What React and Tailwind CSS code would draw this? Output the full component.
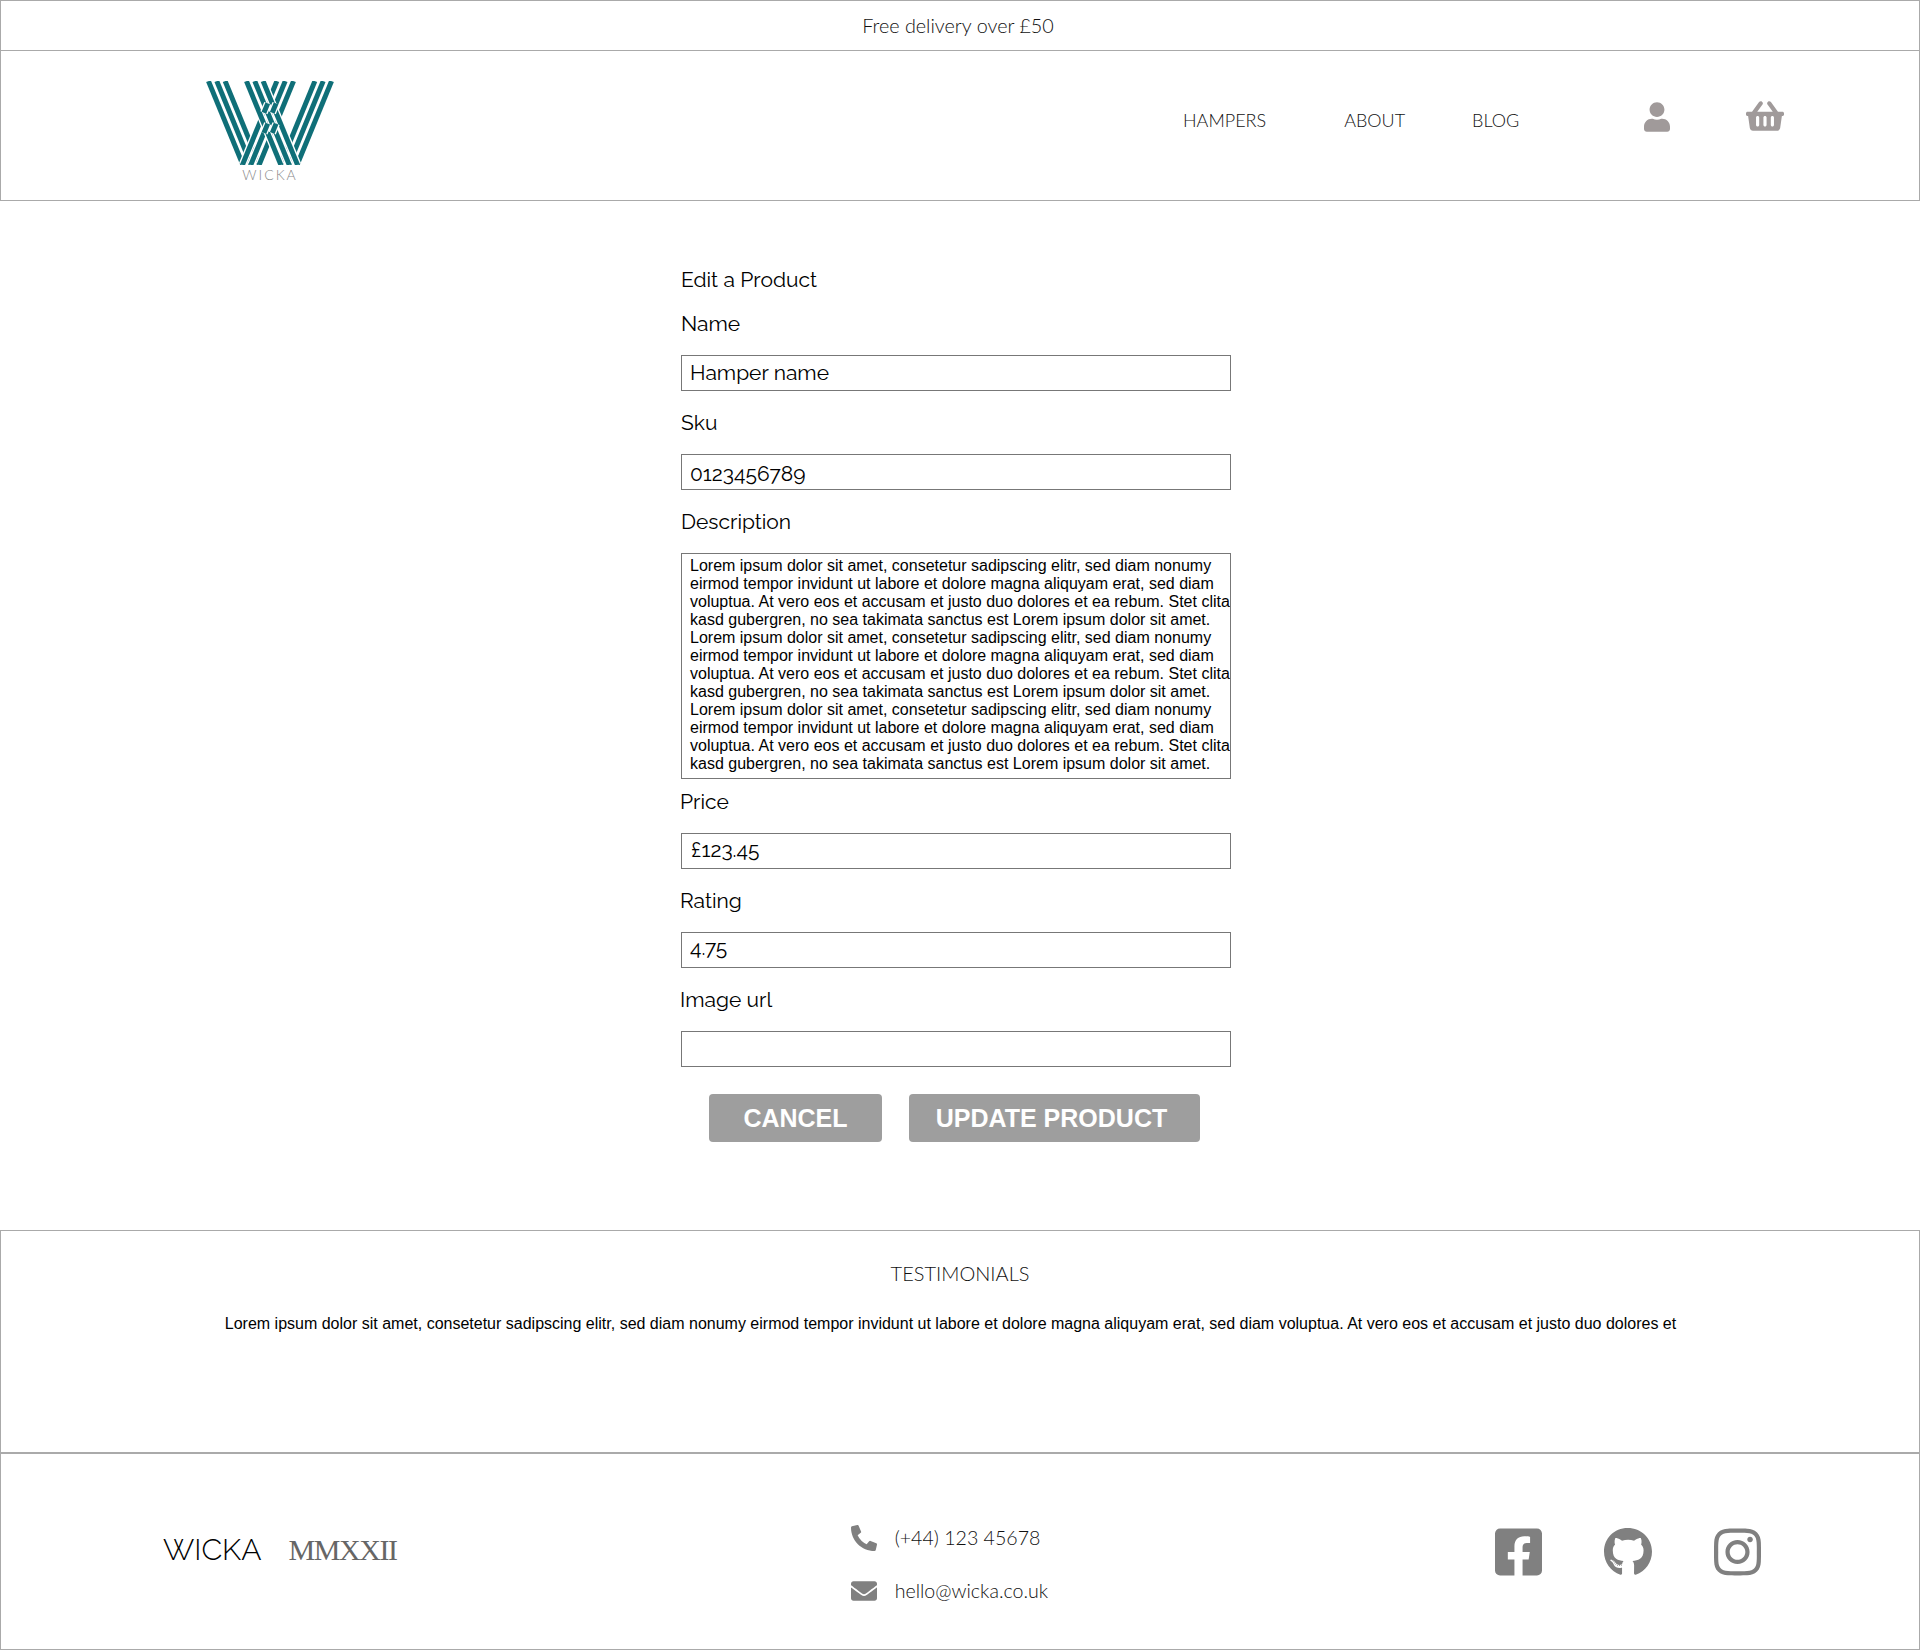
import { FaUser, FaShoppingBasket, FaPhoneAlt, FaEnvelope, FaFacebookSquare, FaGithub, FaInstagram } from "react-icons/fa";

const LOREM = [
  "Lorem ipsum dolor sit amet, consetetur sadipscing elitr, sed diam nonumy",
  "eirmod tempor invidunt ut labore et dolore magna aliquyam erat, sed diam",
  "voluptua. At vero eos et accusam et justo duo dolores et ea rebum. Stet clita",
  "kasd gubergren, no sea takimata sanctus est Lorem ipsum dolor sit amet.",
];
const DESCRIPTION = [...LOREM, ...LOREM, ...LOREM].join("\n");

const raleway = "font-['Raleway','Lato',sans-serif] font-normal text-black";

// slope of the logo bands, x per y
const S = 100 / 243;

function Band({ x, dir, from = -4, to = 247 }) {
  const at = (y) => x + dir * S * y;
  return (
    <g>
      <line x1={at(from)} y1={from} x2={at(to)} y2={to} className="stroke-white" strokeWidth="23" />
      <line x1={at(from)} y1={from} x2={at(to)} y2={to} className="stroke-[#0f6f78]" strokeWidth="15" />
    </g>
  );
}

function Logo() {
  const left = [9, 34, 59];
  const right = [375, 350, 325];
  const midDown = [123, 148, 173];
  const midUp = [211, 236, 261];
  return (
    <svg viewBox="0 0 384 243" className="w-[128px] h-[84px] block">
      {left.map((x) => <Band key={x} x={x} dir={1} />)}
      {right.map((x) => <Band key={x} x={x} dir={-1} />)}
      {midUp.map((x) => <Band key={x} x={x} dir={-1} />)}
      {midDown.map((x) => <Band key={x} x={x} dir={1} />)}
      {/* over-under at the middle crossings */}
      {midUp.map((u, i) =>
        midDown.map((d, j) => {
          if ((i + j) % 2 === 0) return null;
          const y = (u - d) / (2 * S);
          return <Band key={u + "-" + d} x={u} dir={-1} from={y - 14} to={y + 14} />;
        })
      )}
    </svg>
  );
}

function Field({ label, value, inputClass }) {
  return (
    <div>
      <div className={`h-6 leading-6 mb-[19px] text-[21px] ${raleway}`}>{label}</div>
      <input
        readOnly
        value={value}
        className={`block w-[550px] h-9 border border-[#777] bg-white text-[21px] outline-none ${inputClass} ${raleway}`}
      />
    </div>
  );
}

function App() {
  return (
    <div className="w-[1920px] min-h-[1650px] bg-white flex flex-col font-['Lato',sans-serif]">

      {/* top strip */}
      <div className="h-[51px] border border-[#aaa] flex items-center justify-center pr-[4px] text-[19.8px] font-light text-[#111]">
        Free delivery over £50
      </div>

      {/* header */}
      <header className="h-[150px] border-x border-b border-[#aaa] flex items-start">
        <div className="ml-[205px] mt-[30px] w-[128px] flex flex-col items-center">
          <Logo />
          <span className="text-[14px] leading-4 mt-[2px] tracking-[2px] font-light text-[#888]">WICKA</span>
        </div>
        <nav className="flex mt-[57px] text-[18px] leading-6 font-light text-[#111]">
          <a className="ml-[849px]">HAMPERS</a>
          <a className="ml-[78px]">ABOUT</a>
          <a className="ml-[67px]">BLOG</a>
        </nav>
        <FaUser className="ml-[125px] mt-[51px] w-[26px] h-[30px] text-[#a09a9a]" />
        <FaShoppingBasket className="ml-[76px] mt-[47px] w-[38px] h-[36px] text-[#a09a9a]" />
      </header>

      {/* edit form */}
      <main className="h-[1029px] flex justify-center pr-[8px] pt-[67px]">
        <form className="w-[550px]">
          <h2 className={`h-6 leading-6 mb-5 text-[21px] ${raleway}`}>Edit a Product</h2>
          <div className="flex flex-col gap-5">
            <Field label="Name" value="Hamper name" inputClass="px-2 pb-[2px]" />
            <Field label="Sku" value="0123456789" inputClass="px-2 pt-[2px]" />
            <div>
              <div className={`h-6 leading-6 mb-[19px] text-[21px] ${raleway}`}>Description</div>
              <textarea
                readOnly
                wrap="off"
                value={DESCRIPTION}
                className="block w-[550px] h-[226px] pl-2 pt-[3px] border border-[#777] bg-white text-[16px] leading-[18px] text-black font-['Liberation_Sans',sans-serif] overflow-hidden resize-none outline-none"
              />
            </div>
          </div>
          <div className="flex flex-col gap-5 mt-[11px] -ml-px">
            <Field label="Price" value="£123.45" inputClass="ml-px pl-[9px] pb-[3px]" />
            <Field label="Rating" value="4.75" inputClass="ml-px px-2 pb-[5px]" />
            <Field label="Image url" value="" inputClass="ml-px px-2" />
          </div>
          <div className="flex mt-[27px] ml-[28px] gap-[27px] font-['Liberation_Sans',sans-serif] font-bold text-white text-[25px]">
            <button type="button" className="w-[173px] h-12 pt-[2px] bg-[#9e9e9e] rounded-[4px]">CANCEL</button>
            <button type="button" className="w-[291px] h-12 pt-[2px] pr-[6px] bg-[#9e9e9e] rounded-[4px]">UPDATE PRODUCT</button>
          </div>
        </form>
      </main>

      {/* testimonials */}
      <section className="h-[223px] border border-[#aaa] flex flex-col items-center">
        <h3 className="mt-[30px] text-[20px] leading-6 font-light text-[#111]">TESTIMONIALS</h3>
        <p className="mt-[30px] pr-[19px] text-[16px] leading-[18px] text-black font-['Liberation_Sans',sans-serif]">
          Lorem ipsum dolor sit amet, consetetur sadipscing elitr, sed diam nonumy eirmod tempor invidunt ut labore et dolore magna aliquyam erat, sed diam voluptua. At vero eos et accusam et justo duo dolores et
        </p>
      </section>

      {/* footer */}
      <footer className="h-[197px] border border-[#aaa] flex items-center">
        <div className="ml-[162px] mb-[5px] flex items-baseline">
          <span className="text-[30px] font-['Raleway',sans-serif] font-light text-black">WICKA</span>
          <span className="ml-[27px] text-[30px] tracking-[-1.4px] text-[#666] font-['Liberation_Serif',serif]">MMXXII</span>
        </div>
        <div className="ml-[454px] mt-[26px] flex flex-col gap-[27px] text-[19.6px] leading-6 font-light text-[#111]">
          <div className="flex items-center gap-[18px]">
            <FaPhoneAlt className="w-[26px] h-[26px] text-[#808080]" />
            <span>(+44) 123 45678</span>
          </div>
          <div className="flex items-center gap-[18px]">
            <FaEnvelope className="w-[26px] h-[26px] text-[#808080]" />
            <span>hello@wicka.co.uk</span>
          </div>
        </div>
        <div className="ml-auto mr-[158px] flex gap-[62px] text-[#808080]">
          <FaFacebookSquare className="w-[47px] h-[54px]" />
          <FaGithub className="w-[48px] h-[54px]" />
          <FaInstagram className="w-[47px] h-[54px]" />
        </div>
      </footer>
    </div>
  );
}

export default App;
